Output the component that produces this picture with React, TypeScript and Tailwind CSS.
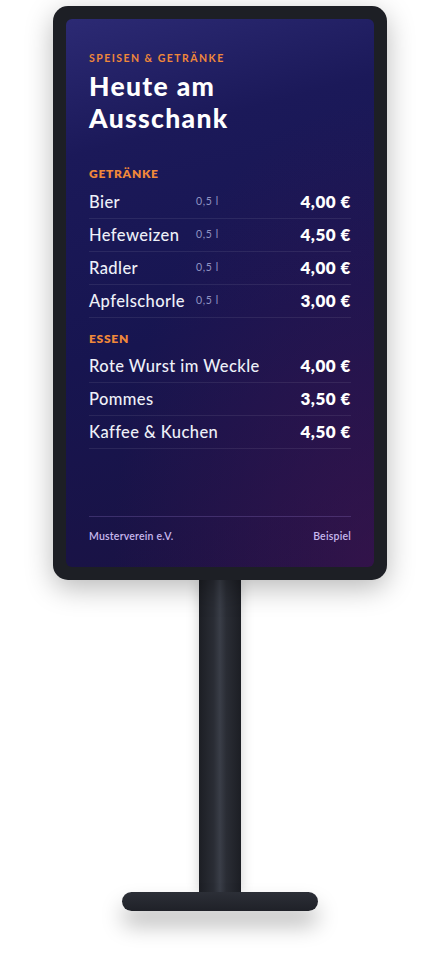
import React from "react";

type Item = {name: string; qty?: string; price: string};

const drinks: Item[] = [
  {name: "Bier", qty: "0,5 l", price: "4,00 €"},
  {name: "Hefeweizen", qty: "0,5 l", price: "4,50 €"},
  {name: "Radler", qty: "0,5 l", price: "4,00 €"},
  {name: "Apfelschorle", qty: "0,5 l", price: "3,00 €"},
];

const food: Item[] = [
  {name: "Rote Wurst im Weckle", price: "4,00 €"},
  {name: "Pommes", price: "3,50 €"},
  {name: "Kaffee & Kuchen", price: "4,50 €"},
];

const MenuRow = ({item}: {item: Item}) => (
  <div className="flex items-center h-[33px] border-b border-white/[0.08]">
    <div className={item.qty ? "w-[107px] shrink-0 whitespace-nowrap" : "whitespace-nowrap"}>
      <span className="text-[16.5px] font-medium tracking-[0.025em] text-[#eef0f8]">{item.name}</span>
    </div>
    {item.qty && <span className="text-[10.5px] text-[#9094c2] tracking-[0.06em]">{item.qty}</span>}
    <span className="ml-auto text-[17px] font-extrabold tracking-[0.03em] text-white">{item.price}</span>
  </div>
);

const App = () => {
  return (
    <div className="min-h-[954px] bg-white flex flex-col items-center pt-[6px] font-['Lato',sans-serif]">
      {/* screen frame */}
      <div
        className="relative z-10 w-[334px] h-[574px] rounded-[15px] bg-[#1d1f25] p-[13px] shadow-[0_8px_28px_rgba(0,0,0,0.28)]">
        <div
          className="h-full rounded-[6px] flex flex-col px-[23px] pt-[32px] pb-[24px] bg-[radial-gradient(ellipse_at_100%_100%,rgba(70,20,80,0.55)_0%,rgba(70,20,80,0)_60%),linear-gradient(165deg,#2c2a74_0%,#1b1959_22%,#171550_55%,#1a1242_100%)]">
          <div className="text-[10.5px] leading-[14px] font-bold tracking-[0.14em] text-[#f0883a]">
            SPEISEN &amp; GETRÄNKE
          </div>
          <h1 className="mt-[5px] flex flex-col text-[26.5px] font-black text-white tracking-[0.05em]">
            <span className="leading-[32px]">Heute am</span>
            <span className="leading-[32px]">Ausschank</span>
          </h1>

          <div className="mt-[32px] text-[12px] leading-[16px] font-extrabold tracking-[0.06em] text-[#f0883a]">
            GETRÄNKE
          </div>
          <div className="mt-[4px]">
            {drinks.map(d => <MenuRow key={d.name} item={d}/>)}
          </div>

          <div className="mt-[13px] text-[12px] leading-[16px] font-extrabold tracking-[0.06em] text-[#f0883a]">
            ESSEN
          </div>
          <div className="mt-[3px]">
            {food.map(f => <MenuRow key={f.name} item={f}/>)}
          </div>

          <div className="mt-auto border-t border-[#8a6fc0]/30 pt-[12px] flex justify-between text-[10.5px] leading-[14px] font-semibold tracking-[0.02em] text-[#c8b8ee]">
            <span>Musterverein e.V.</span>
            <span>Beispiel</span>
          </div>
        </div>
      </div>

      {/* pole */}
      <div
        className="w-[42px] h-[312px] bg-[linear-gradient(90deg,#1c1e24_0%,#2a2d35_35%,#3a3e48_50%,#2a2d35_65%,#1c1e24_100%)] shadow-[0_0_12px_rgba(0,0,0,0.2)]"/>

      {/* base */}
      <div
        className="w-[196px] h-[19px] rounded-full bg-[linear-gradient(180deg,#2c2f37_0%,#1f2128_100%)] shadow-[0_14px_22px_rgba(0,0,0,0.28)]"/>
    </div>
  );
};

export default App;
